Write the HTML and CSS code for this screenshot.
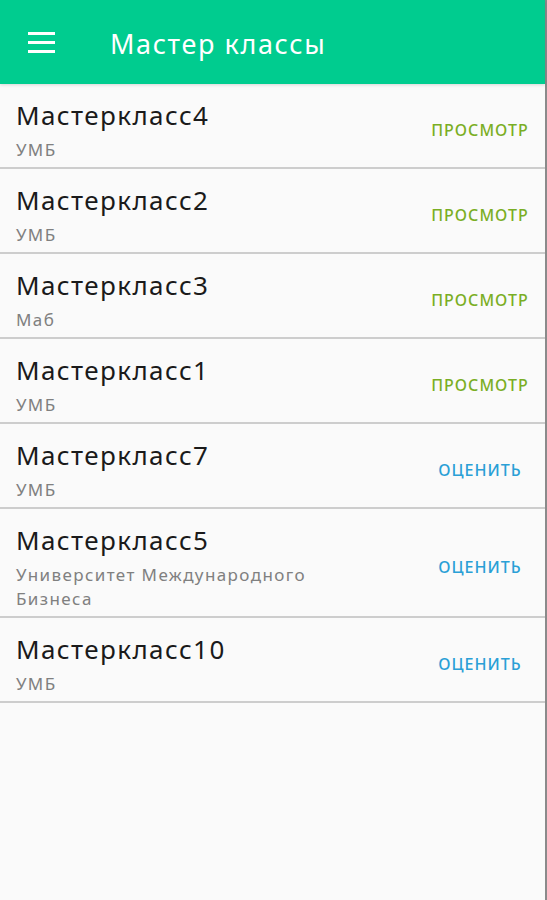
FILE: index.html
```html
<!DOCTYPE html>
<html lang="ru">
<head>
  <meta charset="UTF-8">
  <title>Мастер классы</title>
  <link rel="stylesheet" href="styles.css">
</head>
<body>
  <div class="app">
    <header class="toolbar">
      <svg class="menu-icon" width="27" height="21" viewBox="0 0 27 21">
        <rect x="0" y="0" width="27" height="3" fill="#fff"/>
        <rect x="0" y="9" width="27" height="3" fill="#fff"/>
        <rect x="0" y="18" width="27" height="3" fill="#fff"/>
      </svg>
      <h1 class="toolbar-title">Мастер классы</h1>
    </header>

    <ul class="list">
      <li class="item">
        <div class="info">
          <div class="name">Мастеркласс4</div>
          <div class="org">УМБ</div>
        </div>
        <div class="action view">ПРОСМОТР</div>
      </li>
      <li class="item">
        <div class="info">
          <div class="name">Мастеркласс2</div>
          <div class="org">УМБ</div>
        </div>
        <div class="action view">ПРОСМОТР</div>
      </li>
      <li class="item">
        <div class="info">
          <div class="name">Мастеркласс3</div>
          <div class="org">Маб</div>
        </div>
        <div class="action view">ПРОСМОТР</div>
      </li>
      <li class="item">
        <div class="info">
          <div class="name">Мастеркласс1</div>
          <div class="org">УМБ</div>
        </div>
        <div class="action view">ПРОСМОТР</div>
      </li>
      <li class="item">
        <div class="info">
          <div class="name">Мастеркласс7</div>
          <div class="org">УМБ</div>
        </div>
        <div class="action rate">ОЦЕНИТЬ</div>
      </li>
      <li class="item">
        <div class="info">
          <div class="name">Мастеркласс5</div>
          <div class="org">Университет Международного Бизнеса</div>
        </div>
        <div class="action rate">ОЦЕНИТЬ</div>
      </li>
      <li class="item">
        <div class="info">
          <div class="name">Мастеркласс10</div>
          <div class="org">УМБ</div>
        </div>
        <div class="action rate">ОЦЕНИТЬ</div>
      </li>
    </ul>
  </div>
</body>
</html>
```

FILE: styles.css
```css
html, body {
  margin: 0;
  padding: 0;
  height: 100%;
}
body {
  font-family: "Noto Sans", Roboto, Arial, sans-serif;
  background: #fafafa;
}
.app {
  min-height: 100%;
  border-right: 2px solid #8a8a8a;
  box-sizing: border-box;
}
.toolbar {
  height: 84px;
  background: #00cc8f;
  display: flex;
  align-items: center;
  padding-left: 28px;
  box-shadow: 0 1px 3px rgba(0, 0, 0, 0.15);
  position: relative;
}
.menu-icon {
  display: block;
  margin-top: 1px;
}
.toolbar-title {
  margin: 4px 0 0 55px;
  font-size: 27px;
  font-weight: 400;
  letter-spacing: 1.6px;
  color: #fff;
  line-height: 32px;
}
.list {
  list-style: none;
  margin: 0;
  padding: 0;
}
.item {
  display: flex;
  align-items: center;
  padding: 14px 5px 5px 16px;
  border-bottom: 2px solid #cdcdcd;
}
.info {
  flex: 1;
  max-width: 320px;
}
.name {
  font-size: 26px;
  line-height: 34px;
  letter-spacing: 1.4px;
  color: #1a1a1a;
}
.org {
  font-size: 17px;
  line-height: 24px;
  letter-spacing: 1.4px;
  margin-top: 6px;
  color: #808080;
}
.action {
  width: 120px;
  margin-left: auto;
  text-align: center;
  font-size: 16px;
  font-weight: 500;
  letter-spacing: 1px;
}
.view {
  color: #7aae24;
}
.rate {
  color: #2aa0d6;
}
```
